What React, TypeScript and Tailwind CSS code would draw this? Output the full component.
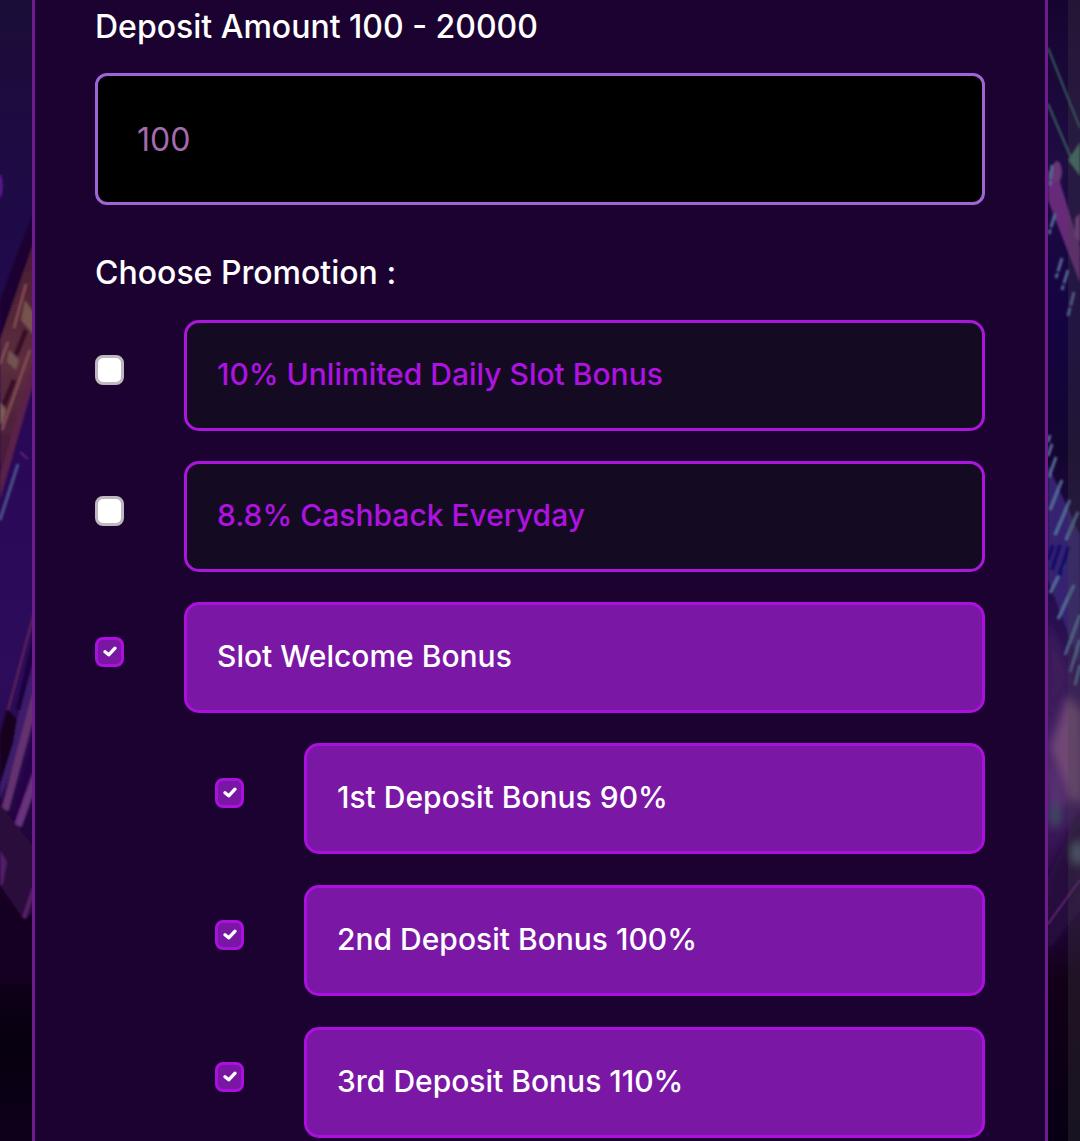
// src/App.tsx

import { useState } from "react";

interface Promotion {
  id: string;
  label: string;
}

const promotions: Promotion[] = [
  { id: "daily-slot", label: "10% Unlimited Daily Slot Bonus" },
  { id: "cashback", label: "8.8% Cashback Everyday" },
  { id: "slot-welcome", label: "Slot Welcome Bonus" },
];

const welcomeSteps: Promotion[] = [
  { id: "first-deposit", label: "1st Deposit Bonus 90%" },
  { id: "second-deposit", label: "2nd Deposit Bonus 100%" },
  { id: "third-deposit", label: "3rd Deposit Bonus 110%" },
];

const headingClasses = "block text-[32px] leading-10 font-medium text-white";
const optionClasses =
  "flex-1 min-h-[111px] rounded-[15px] border-3 px-[30px] py-[31px] text-[30px] leading-10 font-medium cursor-pointer";

interface PromotionOptionProps {
  promotion: Promotion;
  checked: boolean;
  onToggle: (id: string) => void;
}

const PromotionOption = ({
  promotion,
  checked,
  onToggle,
}: PromotionOptionProps) => (
  <div className="flex items-start gap-[60px]">
    <span className="mt-[35px] grid h-[30px] w-[29px] shrink-0 place-items-center">
      <input
        id={promotion.id}
        type="checkbox"
        checked={checked}
        onChange={() => onToggle(promotion.id)}
        className="col-start-1 row-start-1 h-[30px] w-[29px] appearance-none rounded-lg border-3 border-[#c0b8bf] bg-white checked:border-[#ab10df] checked:bg-[#7a16a4]"
      />
      {checked && (
        <svg
          viewBox="0 0 29 30"
          className="pointer-events-none col-start-1 row-start-1 h-[30px] w-[29px]"
          fill="none"
          stroke="white"
          strokeWidth="3.4"
          strokeLinecap="round"
          strokeLinejoin="round"
          aria-hidden="true"
        >
          <path d="M10 14.8l3.7 3 6.3-6.6" />
        </svg>
      )}
    </span>
    <label
      htmlFor={promotion.id}
      className={`${optionClasses} ${
        checked
          ? "border-[#ab10df] bg-[#7a17a4] text-white"
          : "border-[#ab15dc] bg-[#140b22] text-[#ae12e0]"
      }`}
    >
      {promotion.label}
    </label>
  </div>
);

// City lights behind the deposit card
const Backdrop = () => (
  <svg
    viewBox="0 0 1080 1141"
    preserveAspectRatio="none"
    className="absolute inset-0 size-full"
    aria-hidden="true"
  >
    <defs>
      <linearGradient id="left-sky" x1="0" y1="0" x2="0" y2="1">
        <stop offset="0" stopColor="#1b0d38" />
        <stop offset="0.2" stopColor="#1f0a48" />
        <stop offset="0.4" stopColor="#2a0858" />
        <stop offset="0.6" stopColor="#2d0c5c" />
        <stop offset="0.75" stopColor="#1e0537" />
        <stop offset="0.82" stopColor="#120020" />
        <stop offset="0.92" stopColor="#07000f" />
        <stop offset="1" stopColor="#0d001c" />
      </linearGradient>
      <linearGradient id="right-sky" x1="0" y1="0" x2="0" y2="1">
        <stop offset="0" stopColor="#160430" />
        <stop offset="0.14" stopColor="#1e0c42" />
        <stop offset="0.28" stopColor="#150342" />
        <stop offset="0.4" stopColor="#14052e" />
        <stop offset="0.55" stopColor="#281050" />
        <stop offset="0.68" stopColor="#4c246c" />
        <stop offset="0.8" stopColor="#200638" />
        <stop offset="0.86" stopColor="#120018" />
        <stop offset="1" stopColor="#070014" />
      </linearGradient>
      <linearGradient id="tower" x1="0" y1="0" x2="0" y2="1">
        <stop offset="0" stopColor="#471a32" />
        <stop offset="0.5" stopColor="#5c2e3d" />
        <stop offset="1" stopColor="#401339" />
      </linearGradient>
      <filter id="soft" x="-20%" y="-20%" width="140%" height="140%">
        <feGaussianBlur stdDeviation="1" />
      </filter>
      <filter id="haze" x="-50%" y="-20%" width="200%" height="140%">
        <feGaussianBlur stdDeviation="4" />
      </filter>
    </defs>

    <rect width="540" height="1141" fill="url(#left-sky)" />
    <rect x="540" width="540" height="1141" fill="url(#right-sky)" />

    <g filter="url(#soft)">
      <ellipse cx="0" cy="186" rx="3" ry="12" fill="#54148a" />
      <path d="M36 205L0 300v50L36 260z" fill="#1a0330" />
      <path d="M36 235L0 340v155L10 460 36 370z" fill="url(#tower)" />
      <path d="M26 284L14 328M30 350L2 430M8 342L0 364" stroke="#8d5358" strokeWidth="2" />
      <path d="M25 300l8 12v22l-12-14z" fill="#77534e" />
      <path d="M9 350l10 10-3 10-9-8z" fill="#725250" />
      <path d="M0 402l6 8-3 12-3 3z" fill="#7c5c55" />
      <path d="M26 330L16 355M14 380L4 405" stroke="#371026" strokeWidth="5" />
      <path d="M36 375L0 500v-25L36 350z" fill="#5a2148" />
      <path d="M18 464L0 520" stroke="#4c5389" strokeWidth="3" />
      <path d="M20 452l8 7" stroke="#5c267d" strokeWidth="2" />

      <path d="M36 606L8 710" stroke="#672857" strokeWidth="2" />
      <path d="M36 655L12 735 0 775v25l8-20L36 700z" fill="#3c1c6b" />
      <path d="M36 635L18 710" stroke="#1f063d" strokeWidth="5" />
      <path d="M36 695L5 810" stroke="#65306f" strokeWidth="8" />
      <path d="M36 735L12 835" stroke="#260548" strokeWidth="6" />
      <path d="M36 775L18 826" stroke="#68307c" strokeWidth="8" />
      <path d="M7 709l10 10-4 24-13 42v-50z" fill="#12001e" />
      <path d="M0 804L36 850v60L24 920 0 885z" fill="#2c0d3b" />
      <path d="M0 850l7 12-4 22-3 2z" fill="#511b69" />
      <path d="M34 888L24 918" stroke="#56216b" strokeWidth="4" />
      <path d="M0 888l22 30 14 6v60H0z" fill="#140020" />
    </g>

    <g filter="url(#soft)">
      <path d="M1048 48l32 80M1048 104l24 56" stroke="#37605f" strokeWidth="2" />
      <path d="M1068 160l12-18v34z" fill="#437164" />
      <path d="M1048 170l12 12 20 65v36L1048 200z" fill="#662c79" />
      <ellipse cx="1057" cy="172" rx="5" ry="11" fill="#653675" />
      <path d="M1075 218l5-5v30l-5-7z" fill="#753b7e" />
      <path
        d="M1055 214l-6 20M1062 258l-6 20M1068 270l-6 20M1074 292l-6 24M1052 165l-2 20"
        stroke="#526895"
        strokeWidth="3"
        strokeDasharray="14 2"
      />
      <path d="M1048 465l32 70v130l-32-85z" fill="#35246f" />
      <path
        d="M1050 435l-2 7M1052 444l-4 12M1056 457l-7 20M1062 480l-12 30M1070 500l-15 35M1078 512l-12 28M1064 565l-14 28M1074 585l-16 34M1080 615l-15 40M1080 640l-10 32M1080 665l-5 20"
        stroke="#536b98"
        strokeWidth="3"
      />
      <path d="M1053 545l-5 15M1060 545l-8 25M1069 546l-10 30" stroke="#14106b" strokeWidth="4" />
    </g>
    <g filter="url(#haze)">
      <path d="M1048 620l22 55-22 50z" fill="#3e1c5a" />
      <path d="M1068 695l14 18v90l-12-5-20-50z" fill="#704675" />
      <path d="M1048 760l20 40-20 20z" fill="#56306f" />
      <ellipse cx="1055" cy="815" rx="7" ry="13" fill="#3f4464" />
      <path d="M1084 805L1046 880v75l38-50z" fill="#28083d" />
      <ellipse cx="1078" cy="853" rx="5" ry="11" fill="#56637a" />
    </g>
    <path d="M1048 924l32-44" stroke="#481a5d" strokeWidth="3" />
    <rect x="1068" width="12" height="1141" fill="#454545" fillOpacity="0.28" />
  </svg>
);

export default function App() {
  const [amount, setAmount] = useState("");
  const [selected, setSelected] = useState<string[]>([
    "slot-welcome",
    "first-deposit",
    "second-deposit",
    "third-deposit",
  ]);

  const toggle = (id: string) =>
    setSelected((prev) =>
      prev.includes(id) ? prev.filter((item) => item !== id) : [...prev, id],
    );

  return (
    <main className="relative min-h-screen bg-[#12001e] px-8 font-['Inter',sans-serif]">
      <Backdrop />
      <form className="relative min-h-screen border-x-3 border-[#701c91] bg-[#1c0230] px-[60px] pt-[7px] pb-[3px]">
        <label htmlFor="amount" className={headingClasses}>
          Deposit Amount 100 - 20000
        </label>
        <input
          id="amount"
          type="text"
          inputMode="numeric"
          placeholder="100"
          value={amount}
          onChange={(e) => setAmount(e.target.value)}
          className="mt-[26px] block h-33 w-full rounded-xl border-3 border-[#9e65d5] bg-black px-[39px] text-[32px] text-white outline-none placeholder:text-[#a36bad]"
        />

        <fieldset className="mt-12">
          <legend className={headingClasses}>Choose Promotion :</legend>
          <div className="mt-[27px] flex flex-col gap-[30px]">
            {promotions.map((promotion) => (
              <PromotionOption
                key={promotion.id}
                promotion={promotion}
                checked={selected.includes(promotion.id)}
                onToggle={toggle}
              />
            ))}
            <div className="flex flex-col gap-[31px] pl-30">
              {welcomeSteps.map((promotion) => (
                <PromotionOption
                  key={promotion.id}
                  promotion={promotion}
                  checked={selected.includes(promotion.id)}
                  onToggle={toggle}
                />
              ))}
            </div>
          </div>
        </fieldset>
      </form>
    </main>
  );
}
